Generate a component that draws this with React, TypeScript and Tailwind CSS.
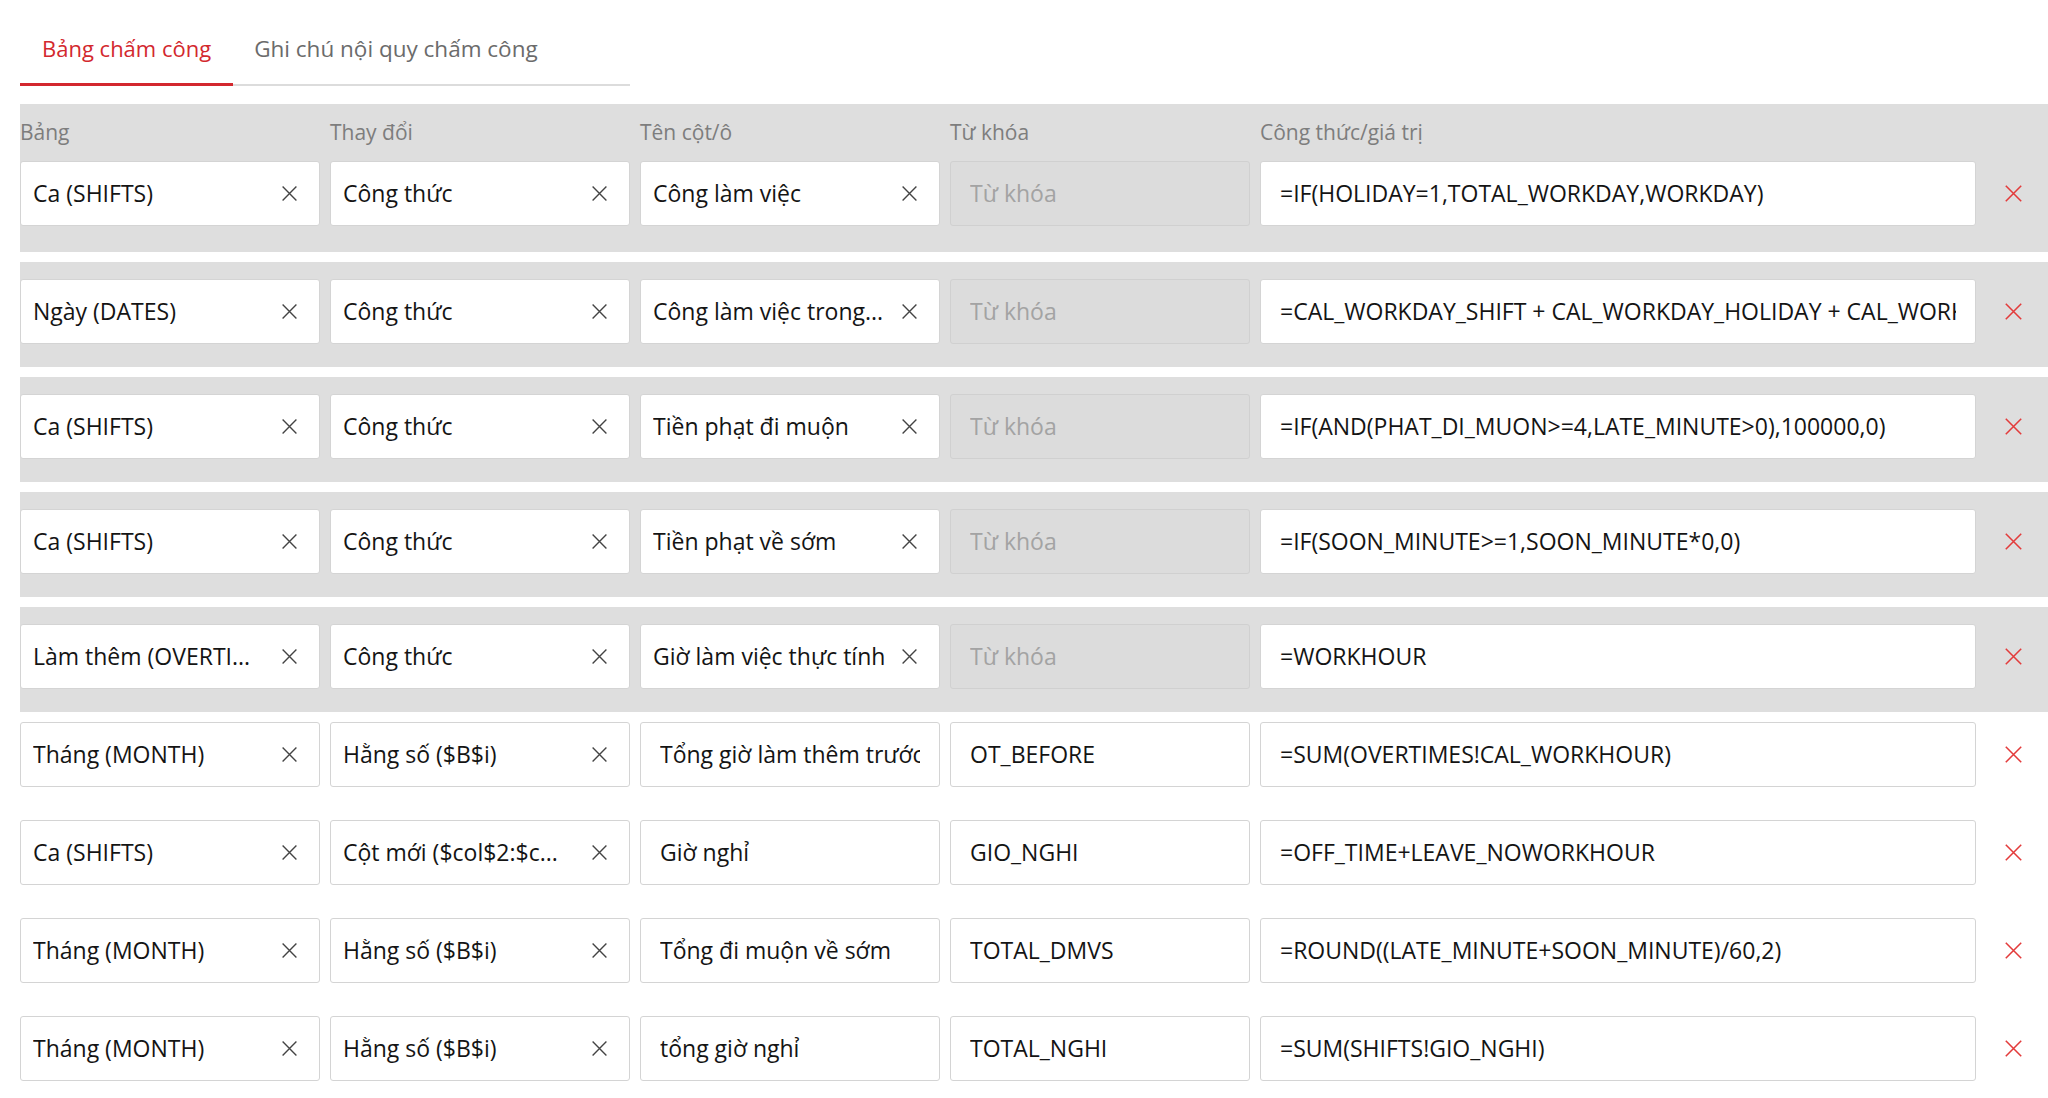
import React from 'react'

type Row = {
  table: string
  kind: string
  col: string
  key: string
  formula: string
  hl: boolean
}

const rows: Row[] = [
  { table: 'Ca (SHIFTS)', kind: 'Công thức', col: 'Công làm việc', key: '', formula: '=IF(HOLIDAY=1,TOTAL_WORKDAY,WORKDAY)', hl: true },
  { table: 'Ngày (DATES)', kind: 'Công thức', col: 'Công làm việc trong...', key: '', formula: '=CAL_WORKDAY_SHIFT + CAL_WORKDAY_HOLIDAY + CAL_WORKDAY_OVERTIME', hl: true },
  { table: 'Ca (SHIFTS)', kind: 'Công thức', col: 'Tiền phạt đi muộn', key: '', formula: '=IF(AND(PHAT_DI_MUON>=4,LATE_MINUTE>0),100000,0)', hl: true },
  { table: 'Ca (SHIFTS)', kind: 'Công thức', col: 'Tiền phạt về sớm', key: '', formula: '=IF(SOON_MINUTE>=1,SOON_MINUTE*0,0)', hl: true },
  { table: 'Làm thêm (OVERTI...', kind: 'Công thức', col: 'Giờ làm việc thực tính', key: '', formula: '=WORKHOUR', hl: true },
  { table: 'Tháng (MONTH)', kind: 'Hằng số ($B$i)', col: 'Tổng giờ làm thêm trước giờ', key: 'OT_BEFORE', formula: '=SUM(OVERTIMES!CAL_WORKHOUR)', hl: false },
  { table: 'Ca (SHIFTS)', kind: 'Cột mới ($col$2:$c...', col: 'Giờ nghỉ', key: 'GIO_NGHI', formula: '=OFF_TIME+LEAVE_NOWORKHOUR', hl: false },
  { table: 'Tháng (MONTH)', kind: 'Hằng số ($B$i)', col: 'Tổng đi muộn về sớm', key: 'TOTAL_DMVS', formula: '=ROUND((LATE_MINUTE+SOON_MINUTE)/60,2)', hl: false },
  { table: 'Tháng (MONTH)', kind: 'Hằng số ($B$i)', col: 'tổng giờ nghỉ', key: 'TOTAL_NGHI', formula: '=SUM(SHIFTS!GIO_NGHI)', hl: false },
]

/* thin cross, used in selects and as the delete button */
function Cross({ size, color }: { size: number; color: string }) {
  return (
    <svg width={size} height={size} viewBox="0 0 16 16" fill="none">
      <path d="M1.5 1.5 L14.5 14.5 M14.5 1.5 L1.5 14.5" stroke={color} strokeWidth="1.3" />
    </svg>
  )
}

function SelectBox({ value }: { value: string }) {
  return (
    <div className="w-[300px] h-[65px] shrink-0 bg-white border border-[#d4d4d4] rounded-[3px] flex items-center pl-[12px] pr-[21px]">
      <span className="flex-1 whitespace-nowrap overflow-hidden text-[#141414]">{value}</span>
      <Cross size={17} color="#444" />
    </div>
  )
}

function TextBox({ value, width, placeholder, disabled }: { value: string; width: string; placeholder?: string; disabled?: boolean }) {
  return (
    <div
      className={`${width} h-[65px] shrink-0 border rounded-[3px] flex items-center px-[19px] ${
        disabled ? 'bg-[#dcdcdc] border-[#d0d0d0]' : 'bg-white border-[#d4d4d4]'
      }`}
    >
      <div className="flex-1 whitespace-nowrap overflow-hidden">
        {value ? <span className="text-[#141414]">{value}</span> : <span className="text-[#a3a3a3]">{placeholder}</span>}
      </div>
    </div>
  )
}

function FieldRow({ row }: { row: Row }) {
  return (
    <div className="flex items-center gap-[10px]">
      <SelectBox value={row.table} />
      <SelectBox value={row.kind} />
      {row.hl ? <SelectBox value={row.col} /> : <TextBox value={row.col} width="w-[300px]" />}
      <TextBox value={row.key} width="w-[300px]" placeholder="Từ khóa" disabled={row.hl} />
      <TextBox value={row.formula} width="w-[716px]" />
      <div className="w-[54px] shrink-0 flex justify-center">
        <Cross size={19} color="#e33b3b" />
      </div>
    </div>
  )
}

export default function App() {
  return (
    <div className="min-h-screen bg-white font-['Open_Sans',sans-serif] text-[23px] pt-[30px]">
      {/* tabs */}
      <div className="ml-[20px] w-[610px] flex border-b-2 border-[#dcdcdc] text-[22px]">
        <div className="px-[22px] pb-[17px] leading-[36px] text-[#d3282e] border-b-[3px] border-[#d3282e] -mb-[2px]">
          Bảng chấm công
        </div>
        <div className="px-[21px] pt-[1px] pb-[16px] leading-[36px] text-[#6b6b6b] text-[22.5px]">Ghi chú nội quy chấm công</div>
      </div>

      {/* rows */}
      <div className="ml-[20px] mt-[18px]">
        {rows.map((row, i) =>
          row.hl ? (
            <div key={i} className={`bg-[#dedede] mb-[10px] pt-[17px] ${i === 0 ? 'pb-[26px]' : 'pb-[23px]'}`}>
              {i === 0 && (
                <div className="flex gap-[10px] -mt-[1px] mb-[17px] text-[21px] leading-[24px] text-[#7d7d7d]">
                  <div className="w-[300px]">Bảng</div>
                  <div className="w-[300px]">Thay đổi</div>
                  <div className="w-[300px]">Tên cột/ô</div>
                  <div className="w-[300px]">Từ khóa</div>
                  <div className="w-[716px]">Công thức/giá trị</div>
                </div>
              )}
              <FieldRow row={row} />
            </div>
          ) : (
            <div key={i} className="pb-[33px]">
              <FieldRow row={row} />
            </div>
          ),
        )}
      </div>
    </div>
  )
}
